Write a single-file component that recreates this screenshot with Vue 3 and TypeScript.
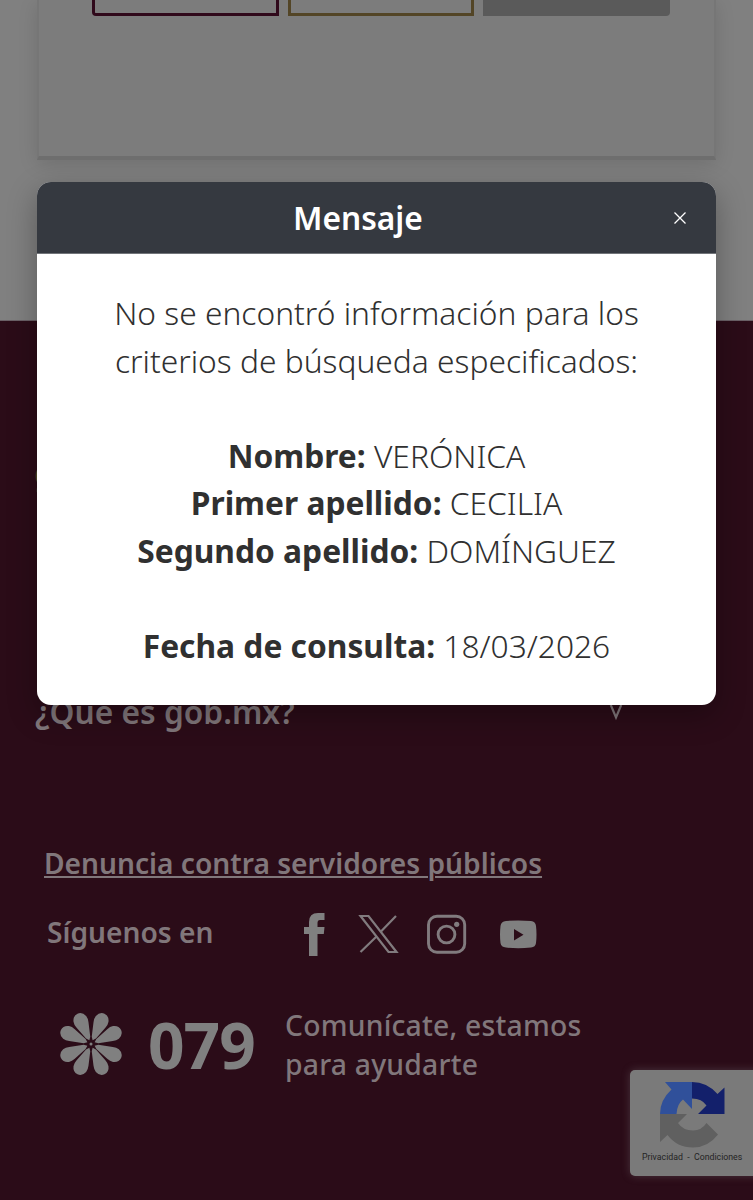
<script setup lang="ts">
interface Detail {
  label: string
  value: string
}

const details: Detail[] = [
  { label: 'Nombre:', value: 'VERÓNICA' },
  { label: 'Primer apellido:', value: 'CECILIA' },
  { label: 'Segundo apellido:', value: 'DOMÍNGUEZ' },
]

const petals: number[] = [24, 65, 115, 156, 204, 245, 295, 336]
</script>

<template>
  <div class="page">
    <main class="content">
      <section class="card">
        <div class="buttons">
          <span class="btn wine"></span>
          <span class="btn gold"></span>
          <span class="btn gray"></span>
        </div>
      </section>
    </main>

    <footer class="footer">
      <div class="row links"><span>g</span></div>
      <div class="row about">
        <span>¿Qué es gob.mx?</span>
        <svg class="chevron" width="14" height="16" viewBox="0 0 14 16">
          <path d="M1.800 0 L7 12.500 L12.200 0" fill="none" stroke="#81777b" stroke-width="2.200" />
        </svg>
      </div>
      <a class="report">Denuncia contra servidores públicos</a>
      <div class="social">
        <span class="follow">Síguenos en</span>
        <svg class="icons" width="250" height="60" viewBox="0 0 250 60">
          <path d="M19 46V24H14V17H19V12Q19 3 28 3H34.500V10H30Q27.500 10 27.500 13V17H34.500L33.800 24H27.500V46Z" fill="#808080" />
          <g fill="none" stroke="#817b7e" stroke-width="2.200">
            <path d="M70.500 6H78.500L106.500 42H98.500Z" />
            <path d="M70.500 42L86.500 26.500M90.500 22L106 6" />
          </g>
          <g fill="none" stroke="#817b7e" stroke-width="2.900">
            <rect x="138.500" y="6.300" width="36.200" height="36" rx="8.500" />
            <circle cx="156.500" cy="24.500" r="8.400" />
          </g>
          <circle cx="166.700" cy="14.300" r="2.600" fill="#817b7e" />
          <path fill-rule="evenodd" d="M216 11Q228 10 241 11Q245.500 11.500 246 16Q247 24.500 246 33Q245.500 37 241 37.600Q228 39 216 37.600Q211 37 210.500 33Q209.500 24.500 210.500 16Q211 11.500 216 11ZM224 19V30.500L233.500 24.700Z" fill="#808080" />
        </svg>
      </div>
      <div class="help">
        <svg class="flower" width="64" height="68" viewBox="-32 -34 64 68">
          <path
            v-for="angle in petals"
            :key="angle"
            :transform="`rotate(${angle})`"
            d="M0 -4L-2.300 -7L-6.600 -21Q-7.700 -24.500 -6.900 -27.500Q-5.200 -33 0 -33.200Q5.200 -33 6.900 -27.500Q7.700 -24.500 6.600 -21L2.300 -7Z"
            fill="#808080"
          />
          <circle r="1.500" fill="#808080" />
        </svg>
        <span class="number">079</span>
        <p class="help-text">Comunícate, estamos<br />para ayudarte</p>
      </div>
    </footer>

    <aside class="captcha">
      <svg width="66" height="67" viewBox="0 0 66 67">
        <path d="M33 1V28L24 18.500Q18 23 17.500 33H1Q1 19 12.500 8.500L6 1Z" fill="#30509a" />
        <path d="M33 1Q48 1 58.500 13L65.500 6.500V33H39L47.500 24.500Q43 17.500 33 17.500Z" fill="#13206b" />
        <path d="M1 33H28L19 42Q24 49.500 34 49.500Q42.500 49.500 47.500 42L59 53.500Q49 66.500 34 66.500Q18 66.500 8.500 54L1 61Z" fill="#606060" />
      </svg>
      <span class="terms">Privacidad&nbsp; -&nbsp; Condiciones</span>
    </aside>

    <div class="modal" role="dialog">
      <header class="modal-head">
        <h1>Mensaje</h1>
        <svg class="close" width="14" height="14" viewBox="0 0 14 14">
          <path d="M1.500 1.500L12.500 12.500M12.500 1.500L1.500 12.500" stroke="#fff" stroke-width="1.300" />
        </svg>
      </header>
      <div class="modal-body">
        <p>No se encontró información para los<br />criterios de búsqueda especificados:</p>
        <p>
          <span v-for="item in details" :key="item.label" class="line"><b>{{ item.label }}</b> {{ item.value }}</span>
        </p>
        <p><b>Fecha de consulta:</b> 18/03/2026</p>
      </div>
    </div>
  </div>
</template>

<style>
body {
  margin: 0;
}
</style>

<style scoped>
.page {
  position: relative;
  width: 753px;
  height: 1200px;
  overflow: hidden;
  background: #808080;
  font-family: 'Noto Sans', 'Open Sans', sans-serif;
}
.content {
  box-sizing: border-box;
  height: 321px;
  padding: 0 37px;
  border-bottom: 1px solid #6a6066;
}
.card {
  box-sizing: border-box;
  height: 160px;
  border: 2px solid #767676;
  border-top: 0;
  border-bottom: 4px solid #6e6e6e;
  background: #7c7c7c;
  box-shadow: 0 4px 18px rgba(0, 0, 0, 0.13);
}
.buttons {
  display: flex;
  gap: 9px;
  padding: 0 44px 0 53px;
}
.btn {
  box-sizing: border-box;
  width: 187px;
  height: 16px;
  border: 3px solid;
  border-top: 0;
}
.wine {
  border-color: #30091b;
  border-radius: 0 0 0 4px;
}
.gold {
  border-color: #534526;
}
.gray {
  border-color: #5a5a5a;
  background: #5a5a5a;
  border-radius: 0 0 4px 0;
}
.footer {
  height: 879px;
  background: #2b0c18;
  color: #81777b;
  font-weight: 600;
}
.row {
  display: flex;
  box-sizing: border-box;
  font-size: 31.700px;
  line-height: 44px;
}
.links {
  height: 369px;
  padding: 130px 0 0 34px;
  color: #534526;
}
.about {
  height: 152px;
  padding-left: 35px;
  justify-content: space-between;
  padding-right: 130px;
}
.chevron {
  margin-top: 15px;
}
.report {
  display: block;
  width: max-content;
  margin-left: 44px;
  font-size: 28.170px;
  line-height: 42px;
  text-decoration: underline;
  text-decoration-thickness: 2px;
  text-underline-offset: 2px;
}
.social {
  display: flex;
  height: 60px;
  margin-top: 26px;
  padding-left: 47px;
}
.follow {
  width: 243px;
  font-size: 28.170px;
  line-height: 44px;
}
.help {
  display: flex;
  margin-top: 40px;
  padding-left: 59px;
}
.flower {
  margin-top: 0;
}
.number {
  width: 137px;
  margin-left: 25px;
  font-size: 64px;
  line-height: 70px;
  font-weight: 700;
  letter-spacing: -1px;
  color: #808080;
}
.help-text {
  margin: -4px 0 0;
  font-size: 28.300px;
  line-height: 39px;
  font-weight: 550;
  letter-spacing: 0.220px;
}
.captcha {
  position: absolute;
  top: 1070px;
  left: 630px;
  box-sizing: border-box;
  width: 140px;
  height: 106px;
  padding: 11px 0 0 12px;
  border-radius: 5px;
  background: #7a7a7a;
  box-shadow: 0 0 8px rgba(110, 100, 105, 0.45);
}
.captcha svg {
  display: block;
  margin-left: 17px;
}
.terms {
  display: block;
  margin-top: 1px;
  font: 8.750px/16px Roboto, sans-serif;
  color: #242424;
  white-space: nowrap;
}
.modal {
  position: absolute;
  top: 182px;
  left: 37px;
  width: 679px;
  height: 523px;
  border-radius: 14px;
  background: #fff;
  color: #303030;
  overflow: hidden;
  box-shadow: 0 10px 30px rgba(0, 0, 0, 0.3);
}
.modal-head {
  display: flex;
  align-items: center;
  justify-content: space-between;
  box-sizing: border-box;
  height: 72px;
  padding: 1px 29px 0 256px;
  border-bottom: 1px solid #717479;
  background: #353940;
}
.modal-head h1 {
  margin: 0;
  font-size: 31.700px;
  line-height: 44px;
  font-weight: 600;
  color: #fff;
}
.modal-body {
  padding-top: 35px;
  text-align: center;
  font-size: 31.720px;
  line-height: 47.600px;
  font-weight: 300;
}
.modal-body p {
  margin: 0 0 47.600px;
}
.modal-body b {
  font-weight: 700;
}
.line {
  display: block;
}
</style>
